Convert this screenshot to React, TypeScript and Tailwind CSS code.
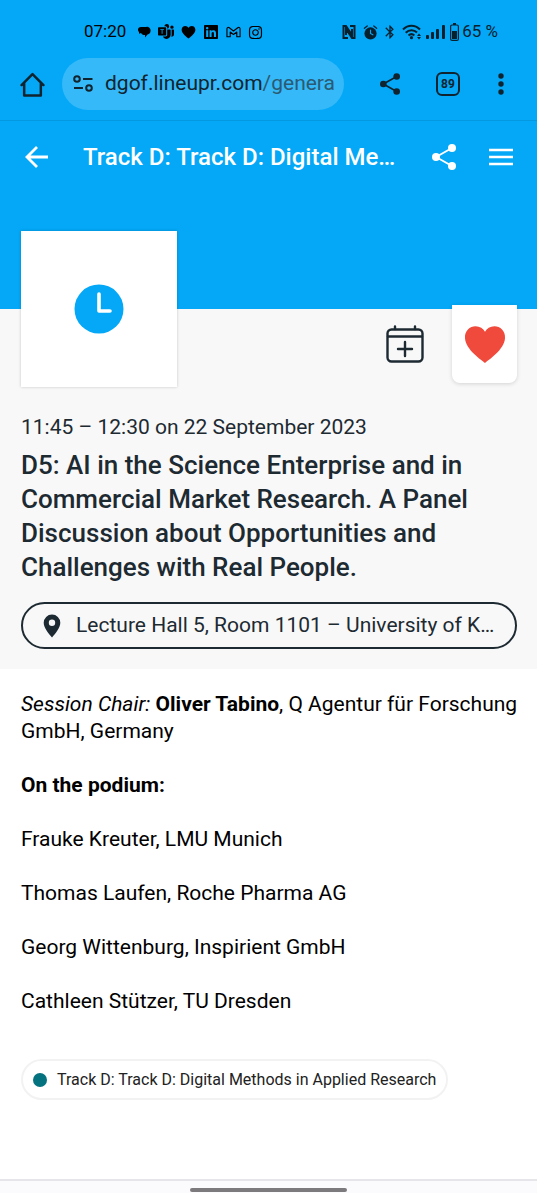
import type { ReactNode } from "react";
import { BsMicrosoftTeams } from "react-icons/bs";
import { FaInstagram, FaLinkedin } from "react-icons/fa";
import { MdBluetooth } from "react-icons/md";

const speakers = [
    "Frauke Kreuter, LMU Munich",
    "Thomas Laufen, Roche Pharma AG",
    "Georg Wittenburg, Inspirient GmbH",
    "Cathleen Stützer, TU Dresden",
];

const HEART = "M12 21.4C9.6 19.3 1.5 14.2 1 7.8C.7 3.7 3.7 1.2 6.8 1.2C9.2 1.2 11 2.4 12 4.3C13 2.4 14.8 1.2 17.2 1.2C20.3 1.2 23.3 3.7 23 7.8C22.5 14.2 14.4 19.3 12 21.4Z";

function ShareIcon({ className }: { className: string }) {
    return (
        <svg viewBox="0 0 24 26" className={className} fill="currentColor" stroke="currentColor" aria-hidden="true">
            <path d="M4 13L20 4M4 13L20 22" strokeWidth="2" />
            <circle cx="4" cy="13" r="4" stroke="none" />
            <circle cx="20" cy="4" r="4" stroke="none" />
            <circle cx="20" cy="22" r="4" stroke="none" />
        </svg>
    );
}

function IconButton({ label, className, children }: { label: string; className: string; children: ReactNode }) {
    return (
        <button type="button" aria-label={label} className={`flex shrink-0 items-center justify-center ${className}`}>
            {children}
        </button>
    );
}

function StatusBar() {
    return (
        <div className="flex h-[58px] items-center justify-between pt-[6px] pr-[39px] pl-[84px] text-[#06202e]">
            <div className="flex items-center gap-[7px] text-black">
                <span className="mr-1 text-[17px]">07:20</span>
                <svg viewBox="0 0 14 14" className="size-[14px]" fill="currentColor" aria-hidden="true">
                    <path d="M4 2H9A3.500 3.500 0 0 1 13.500 6A3.500 3.500 0 0 1 10.500 9.500L8 12.500V10C6 10 4.500 9.500 4.200 8L2 8.800V7C0 5 1 2 4 2Z" />
                </svg>
                <BsMicrosoftTeams className="size-[16px]" />
                <svg viewBox="0 0 24 22" className="h-[14px] w-[15px]" fill="currentColor" aria-hidden="true">
                    <path d={HEART} />
                </svg>
                <FaLinkedin className="size-[16px]" />
                <svg viewBox="0 0 16 12" className="h-[12px] w-[15px]" fill="none" stroke="currentColor" strokeWidth="1.200" strokeLinejoin="round" aria-hidden="true">
                    <path d="M1 11V2.500C1 1 2.500.7 3.500 1.500L8 5L12.500 1.500C13.500.7 15 1 15 2.500V11H11.500V6L8 8.700L4.500 6V11Z" />
                </svg>
                <FaInstagram className="size-[15px]" />
            </div>
            <div className="flex items-center">
                <svg viewBox="0 0 14 14" className="mr-[7px] size-[14px]" fill="none" stroke="currentColor" strokeWidth="2" aria-hidden="true">
                    <path d="M6 13H1.500V1H4L10 10V4M8 1H12.500V13H10L4 4V10" />
                </svg>
                <svg viewBox="0 0 16 16" className="mr-[4px] size-[15px]" fill="currentColor" stroke="currentColor" strokeLinecap="round" aria-hidden="true">
                    <circle cx="8" cy="9" r="6.500" stroke="none" />
                    <path d="M1.500 3.500L4.500 1M14.500 3.500L11.500 1" strokeWidth="1.400" />
                    <path d="M8 5.500V9L10.500 10.500" fill="none" stroke="#04a8f7" strokeWidth="1.200" />
                </svg>
                <MdBluetooth className="mr-[4px] size-[16px]" />
                <svg viewBox="0 0 20 16" className="mr-[4px] h-[16px] w-[20px]" fill="none" stroke="currentColor" strokeWidth="2" aria-hidden="true">
                    <path d="M1 5.500C6 .5 13 .5 18 5.500M3.700 8.700C7 5.500 12 5.500 15 8.500M6.500 11.500C8.500 9.700 10.500 9.700 12.300 11.500" />
                    <circle cx="9.500" cy="13.700" r="1.600" fill="currentColor" stroke="none" />
                    <path d="M15 12L17 9.500L19 12ZM15 13L17 15.500L19 13Z" fill="currentColor" stroke="none" />
                </svg>
                <svg viewBox="0 0 19 14" className="mr-[5px] h-[14px] w-[19px]" fill="currentColor" aria-hidden="true">
                    <rect x="0" y="10" width="3" height="4" rx="1" />
                    <rect x="5" y="7" width="3" height="7" rx="1" />
                    <rect x="10" y="4" width="3" height="10" rx="1" />
                    <rect x="16" y="0" width="3" height="14" rx="1" />
                </svg>
                <svg viewBox="0 0 9 18" className="mr-[3px] h-[18px] w-[9px]" fill="currentColor" aria-hidden="true">
                    <rect x="3" y="0" width="3" height="2" />
                    <rect x=".6" y="2" width="7.800" height="15.400" rx="1.500" fill="none" stroke="currentColor" strokeWidth="1.200" />
                    <rect x="2" y="8" width="5" height="8" />
                </svg>
                <span className="text-[17px]">65 %</span>
            </div>
        </div>
    );
}

function BrowserBar() {
    return (
        <div className="flex items-center border-b border-[#0398df] pr-[28px] pb-[10px] pl-[18px] text-[#10242f]">
            <IconButton label="Home" className="mr-[16px] size-[28px]">
                <svg viewBox="0 0 24 24" className="size-[25px]" fill="none" stroke="currentColor" strokeWidth="2.400" strokeLinecap="round" strokeLinejoin="round" aria-hidden="true">
                    <path d="M1.500 12.500L12 2L22.500 12.500M4 10.500V22.500H20V10.500" />
                </svg>
            </IconButton>
            <button type="button" aria-label="Address bar" className="flex h-[52px] min-w-0 flex-1 items-center overflow-hidden rounded-full bg-[#36b9f8] pr-2 pl-[11px] text-left">
                <svg viewBox="0 0 20 18" className="mr-[12px] h-[18px] w-[20px] shrink-0" fill="none" stroke="currentColor" strokeWidth="2" aria-hidden="true">
                    <circle cx="4" cy="4" r="2.800" />
                    <circle cx="16" cy="13" r="2.800" />
                    <path d="M10 4H19.500M1 13H10" />
                </svg>
                <span className="text-[21px] whitespace-nowrap">
                    dgof.lineupr.com<span className="text-[#2b5a73]">/genera</span>
                </span>
            </button>
            <IconButton label="Share page" className="ml-[34px] size-[24px]">
                <ShareIcon className="h-[22px] w-[20px]" />
            </IconButton>
            <IconButton label="Open tabs" className="ml-[34px] size-[24px] rounded-md border-2 border-current text-[12px] font-bold">
                89
            </IconButton>
            <IconButton label="More options" className="ml-[33px] size-[16px]">
                <svg viewBox="0 0 6 22" className="h-[22px] w-[6px] shrink-0" fill="currentColor" aria-hidden="true">
                    <circle cx="3" cy="3" r="2.700" />
                    <circle cx="3" cy="11" r="2.700" />
                    <circle cx="3" cy="19" r="2.700" />
                </svg>
            </IconButton>
        </div>
    );
}

function AppHeader() {
    return (
        <div className="flex h-[72px] items-center pr-[23px] pl-[23px] text-white">
            <IconButton label="Back" className="mr-[35px] size-[25px]">
                <svg viewBox="0 0 24 24" className="size-[24px]" fill="none" stroke="currentColor" strokeWidth="2.800" aria-hidden="true">
                    <path d="M24 12H3M13 2L3 12L13 22" />
                </svg>
            </IconButton>
            <h1 className="min-w-0 flex-1 truncate text-[24px] leading-[32px] font-medium">
                Track D: Track D: Digital Methods in Applied Research
            </h1>
            <IconButton label="Share session" className="ml-[30px] size-[26px]">
                <ShareIcon className="h-[26px] w-[24px]" />
            </IconButton>
            <IconButton label="Menu" className="ml-[31px] size-[26px]">
                <svg viewBox="0 0 24 18" className="h-[18px] w-[24px]" stroke="currentColor" strokeWidth="2.600" aria-hidden="true">
                    <path d="M0 2H24M0 9H24M0 16H24" />
                </svg>
            </IconButton>
        </div>
    );
}

function SessionSummary() {
    return (
        <section className="flex flex-col bg-[#f8f8f8] pr-5 pb-5 pl-[21px] text-[#1d2a32]">
            {/* cards overlap the blue header */}
            <div className="-mt-[78px] flex items-end">
                <div className="flex size-[156px] items-center justify-center bg-white shadow-[0_0_3px_rgba(0,0,0,0.2)]">
                    <svg viewBox="0 0 50 50" className="size-[50px]" fill="none" aria-hidden="true">
                        <circle cx="25" cy="25" r="24.500" fill="#04a8f7" />
                        <path d="M25 10V27H36" stroke="#fff" strokeWidth="3.600" strokeLinecap="round" strokeLinejoin="round" />
                    </svg>
                </div>
                <div className="mb-1 ml-auto flex items-center">
                    <IconButton label="Add to calendar" className="mr-[28px]">
                        <svg viewBox="0 0 38 38" className="size-[38px]" fill="none" stroke="currentColor" strokeWidth="2.400" strokeLinecap="round" aria-hidden="true">
                            <rect x="1.500" y="4.500" width="35" height="32" rx="4" />
                            <path d="M2 11.500H36M9 1.500V4M29 1.500V4M19 17V31M12 24H26" />
                        </svg>
                    </IconButton>
                    <IconButton label="Remove from favourites" className="h-[78px] w-[65px] rounded-b-lg bg-white shadow-[0_1px_4px_rgba(0,0,0,0.15)]">
                        <svg viewBox="0 0 24 22" className="h-[40px] w-[44px]" fill="#f04a3c" aria-hidden="true">
                            <path d={HEART} />
                        </svg>
                    </IconButton>
                </div>
            </div>
            <p className="mt-[27px] text-[21px] leading-[27px]">11:45 – 12:30 on 22 September 2023</p>
            <h2 className="mt-[7px] text-[26px] leading-[34px] font-medium">
                D5: AI in the Science Enterprise and in Commercial Market Research. A Panel Discussion about Opportunities and Challenges with Real People.
            </h2>
            <a href="#location" className="mt-[18px] flex h-[47px] items-center rounded-full border-2 border-current pr-[18px] pl-[20px]">
                <svg viewBox="0 0 18 24" className="mr-[15px] h-[24px] w-[18px] shrink-0" fill="currentColor" fillRule="evenodd" aria-hidden="true">
                    <path d="M9 .5A8.300 8.300 0 0 1 17.300 8.800C17.300 14 12 20 9 23.500C6 20 .7 14 .7 8.800A8.300 8.300 0 0 1 9 .5ZM9 5.500A3.200 3.200 0 1 0 9 11.900A3.200 3.200 0 1 0 9 5.500Z" />
                </svg>
                <span className="truncate text-[21px] leading-[27px]">Lecture Hall 5, Room 1101 – University of Kassel</span>
            </a>
        </section>
    );
}

export default function App() {
    return (
        <div className="flex min-h-screen flex-col bg-white pb-[7px] font-[Roboto,sans-serif]">
            <header className="bg-[#04a8f7] pb-[116px]">
                <StatusBar />
                <BrowserBar />
                <AppHeader />
            </header>
            <main>
                <SessionSummary />
                <section className="pt-[22px] pr-4 pl-[21px] text-[21px] leading-[27px] text-black">
                    <p>
                        <em>Session Chair:</em> <strong>Oliver Tabino</strong>, Q Agentur für Forschung GmbH, Germany
                    </p>
                    <p className="mt-[27px] font-bold">On the podium:</p>
                    {speakers.map((speaker) => (
                        <p key={speaker} className="mt-[27px]">{speaker}</p>
                    ))}
                    <a href="#track" className="mt-[44px] inline-flex h-[41px] items-center rounded-full border-2 border-[#f2f2f2] px-[10px] text-[16px] leading-[20px] text-[#222]">
                        <span className="mr-[10px] size-[14px] shrink-0 rounded-full bg-[#05727f]" />
                        Track D: Track D: Digital Methods in Applied Research
                    </a>
                </section>
            </main>
            <footer className="mt-auto flex h-[14px] items-center justify-center border-t-2 border-[#e6e6ea] bg-[#fbfafd] pt-[5px]">
                <div className="h-[4px] w-[157px] rounded-full bg-[#7c7a7d]" />
            </footer>
        </div>
    );
}
